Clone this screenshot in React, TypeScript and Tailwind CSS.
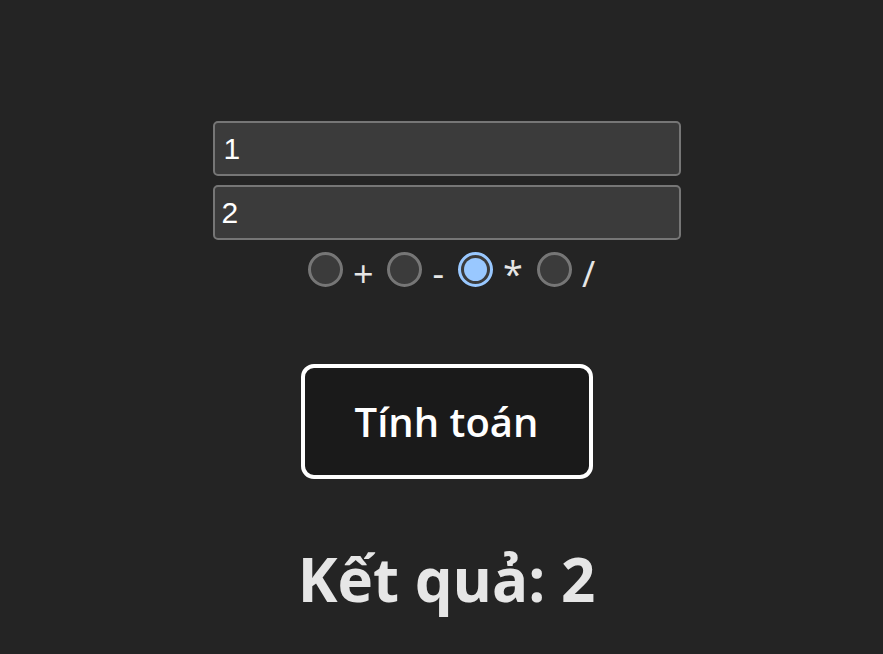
import { useState } from "react"

const ops = ["+", "-", "*", "/"]

export default function App() {
  const [a, setA] = useState("1")
  const [b, setB] = useState("2")
  const [op, setOp] = useState("*")

  return (
    <div className="min-h-screen bg-[#242424] flex flex-col items-center pt-[121px] pl-[10px] font-['Open_Sans',sans-serif]">
      <input
        value={a}
        onChange={(e) => setA(e.target.value)}
        className="w-[468px] h-[55px] rounded-[5px] border-2 border-[#767676] bg-[#3b3b3b] px-[9px] text-[30px] text-white font-['Liberation_Sans',sans-serif] outline-none"
      />
      <input
        value={b}
        onChange={(e) => setB(e.target.value)}
        className="mt-[9px] w-[468px] h-[55px] rounded-[5px] border-2 border-[#767676] bg-[#3b3b3b] px-[7px] text-[30px] text-white font-['Liberation_Sans',sans-serif] outline-none"
      />

      {/* operators */}
      <div className="mt-[11px] ml-[10px] flex items-center gap-[14px] h-[36px] text-[36px] text-[#e6e6e6]">
        {ops.map((o) => (
          <label key={o} className="flex items-center cursor-pointer" onClick={() => setOp(o)}>
            {op === o ? (
              <span className="w-[35px] h-[35px] rounded-full border-[3px] border-[#99c8ff] bg-[#3b3b3b] flex items-center justify-center">
                <span className="w-[23px] h-[23px] rounded-full bg-[#99c8ff]" />
              </span>
            ) : (
              <span className="w-[35px] h-[35px] rounded-full border-[3px] border-[#767676] bg-[#3b3b3b]" />
            )}
            <span className="ml-[10px] mt-[10px] leading-none">{o}</span>
          </label>
        ))}
      </div>

      <button className="mt-[77px] w-[292px] h-[115px] rounded-[13px] border-[4px] border-white bg-[#1a1a1a] text-[40px] font-semibold text-white">
        Tính toán
      </button>

      <h1 className="mt-[70px] text-[60px] font-bold text-[#e6e6e6] leading-none">Kết quả: {b === "" ? "" : "2"}</h1>
    </div>
  )
}
